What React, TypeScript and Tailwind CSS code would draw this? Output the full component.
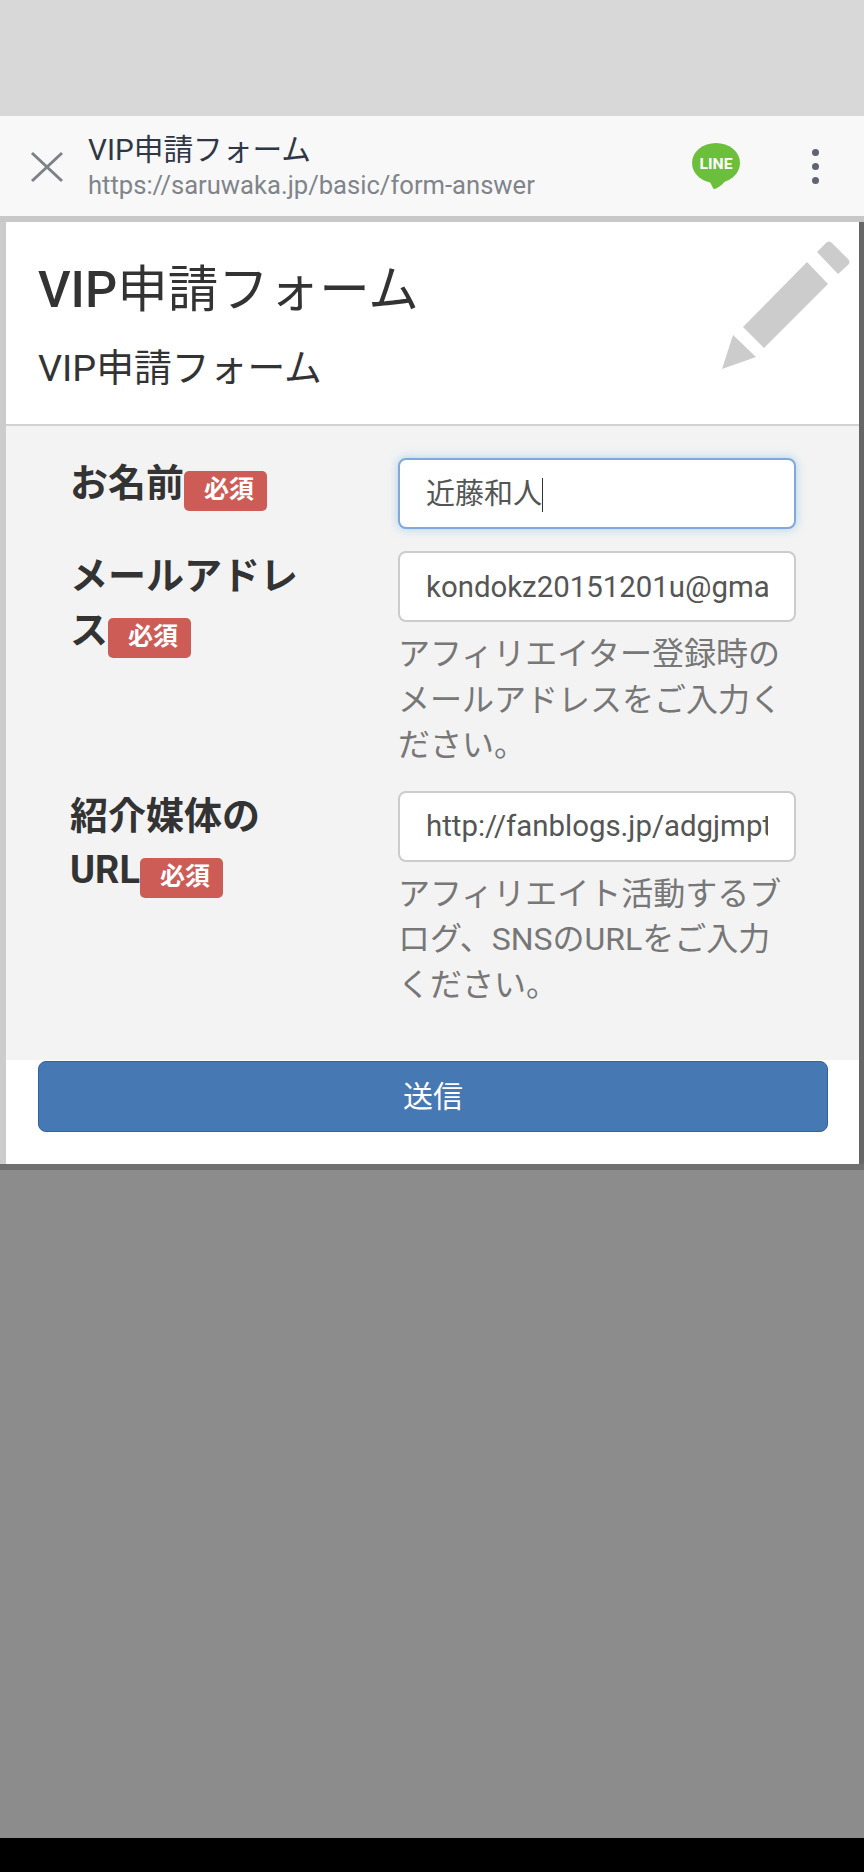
import React from 'react';

const font = { fontFamily: 'Roboto, "Noto Sans CJK JP", sans-serif' };

const Badge = () => (
  <span className="inline-block align-[-2px] w-[83px] h-[40px] leading-[38px] pl-[7px] text-center bg-[#cd5c56] text-white text-[25px] font-bold rounded-[5px]">
    必須
  </span>
);

const fields = [
  { label: 'お名前', value: '近藤和人', focused: true, help: '' },
  {
    label: 'メールアドレス',
    value: 'kondokz20151201u@gma',
    focused: false,
    help: 'アフィリエイター登録時のメールアドレスをご入力ください。'
  },
  {
    label: '紹介媒体のURL',
    value: 'http://fanblogs.jp/adgjmpt',
    focused: false,
    help: 'アフィリエイト活動するブログ、SNSのURLをご入力ください。'
  }
];

const LineIcon = () => (
  <svg width="50" height="48" viewBox="0 0 50 48">
    <ellipse cx="25" cy="21" rx="24" ry="20" fill="#6cbf3a" />
    <path d="M18 38 L22 46 Q23 48 26 46 C30 44 33 41 36 36 Z" fill="#6cbf3a" />
    <text x="25" y="27" textAnchor="middle" fontSize="15.5" fontWeight="700" fill="#fff" fontFamily="Roboto, sans-serif" textLength="33" lengthAdjust="spacingAndGlyphs">LINE</text>
  </svg>
);

const App = () => {
  return (
    <div className="w-[864px] h-[1872px] flex flex-col bg-[#8c8c8c] overflow-hidden" style={font}>
      <div className="h-[116px] bg-[#d8d8d8]" />
      <div className="h-[100px] bg-[#f8f8f9] flex items-center pl-[30px]">
        <svg width="34" height="32" viewBox="0 0 34 32" className="mt-[2px]">
          <path d="M2 2 L32 30 M32 2 L2 30" stroke="#7d8288" strokeWidth="3" fill="none" />
        </svg>
        <div className="ml-[24px] flex-1 pt-[2px]">
          <div className="text-[29.7px] leading-[36px] text-[#2f3645]">VIP申請フォーム</div>
          <div className="text-[25.6px] leading-[34px] text-[#80848b]">https://saruwaka.jp/basic/form-answer</div>
        </div>
        <LineIcon />
        <div className="ml-[71px] mr-[45px] flex flex-col gap-[7px]">
          <span className="w-[7px] h-[7px] rounded-full bg-[#5f6474]" />
          <span className="w-[7px] h-[7px] rounded-full bg-[#5f6474]" />
          <span className="w-[7px] h-[7px] rounded-full bg-[#5f6474]" />
        </div>
      </div>
      <div className="h-[6px] bg-[#c8c8c8]" />
      <div className="flex h-[942px]">
        <div className="w-[6px] bg-[#cccccc]" />
        <div className="relative flex-1 bg-white flex flex-col">
          <div className="h-[204px] border-b-2 border-[#d2d2d2] pl-[32px] pt-[36px]">
            <h1 className="text-[50.5px] leading-[64px] text-[#333333]">
              <span className="font-medium">VIP</span>申請フォーム
            </h1>
            <h2 className="mt-[21px] text-[37.8px] leading-[50px] text-[#333333]">VIP申請フォーム</h2>
          </div>
          <svg className="absolute left-[714px] top-[16px]" width="134" height="134" viewBox="0 0 134 134" fill="#cccccc">
            <path d="M2 131 L13 97 L36 119 Z" />
            <path d="M87 24 L108 46 L44 110 L23 89 Z" />
            <path d="M97 14 L106 5 Q109 2 112 5 L128 21 Q131 24 128 27 L118 36 Z" />
          </svg>
          <div className="bg-[#f3f3f3] h-[634px] pt-[32px] flex flex-col gap-[22px]">
            {fields.map((field) => (
              <div key={field.label} className="flex">
                <label className="-mt-[2px] ml-[64px] w-[242px] mr-[86px] text-[38px] leading-[54px] font-bold text-[#333333]">
                  {field.label}
                  <Badge />
                </label>
                <div className="w-[398px]">
                  {field.focused ? (
                    <div className="h-[71px] flex items-center px-[26px] pt-[2px] bg-white rounded-[8px] border-2 border-[#7fa9dc] shadow-[0_0_10px_rgba(102,175,233,0.5)] text-[29px] text-[#555555]">
                      {field.value}
                      <span className="w-[1px] h-[34px] bg-[#333333]" />
                    </div>
                  ) : (
                    <input
                      readOnly
                      value={field.value}
                      className="w-full h-[71px] px-[26px] bg-white rounded-[8px] border-2 border-[#cccccc] text-[29.4px] text-[#555555] outline-none"
                    />
                  )}
                  {field.help && (
                    <p className="mt-[10px] text-[32px] leading-[45.5px] text-[#777777]">{field.help}</p>
                  )}
                </div>
              </div>
            ))}
          </div>
          <div className="flex-1 pl-[32px] pr-[31px] pt-[1px]">
            <button className="w-full h-[71px] bg-[#4678b4] border border-[#33619a] rounded-[8px] text-white text-[30px]">送信</button>
          </div>
        </div>
        <div className="w-[5px] bg-[#666666]" />
      </div>
      <div className="h-[6px] bg-[#707070]" />
      <div className="flex-1" />
      <div className="h-[34px] bg-black" />
    </div>
  );
};

export default App;
